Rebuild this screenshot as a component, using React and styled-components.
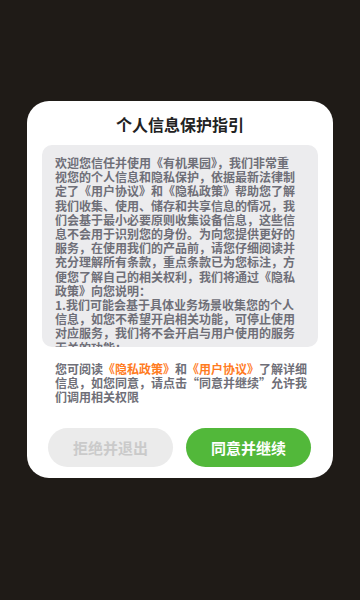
import styled, { createGlobalStyle } from 'styled-components'

const GlobalStyle = createGlobalStyle`
    html, body {
        margin: 0;
        padding: 0;
        background: #1f1b17;
    }
    body {
        font-family: "Noto Sans CJK SC", "Noto Sans", sans-serif;
    }
`

const Screen = styled.div`
    width: 360px;
    height: 600px;
    background: #1f1b17;
    display: flex;
    justify-content: center;
    padding-top: 101px;
    box-sizing: border-box;
    overflow: hidden;
`

const Modal = styled.section`
    width: 306px;
    height: 377px;
    box-sizing: border-box;
    background: #ffffff;
    border-radius: 22px;
    padding: 12px 15px 11px;
    display: flex;
    flex-direction: column;
`

const Title = styled.h2`
    margin: 0;
    font-size: 16px;
    line-height: 22px;
    font-weight: bold;
    color: #222222;
    text-align: center;
`

const ScrollBox = styled.div`
    margin-top: 10px;
    height: 202px;
    box-sizing: border-box;
    background: #ececee;
    border-radius: 10px;
    padding: 11px 22px 0 13px;
    overflow: hidden;
`

const BoxText = styled.p`
    margin: 0;
    width: 240px;
    font-size: 12px;
    line-height: 14.2px;
    font-weight: bold;
    color: #6f6f78;
    white-space: pre-wrap;
`

const Notice = styled.p`
    margin: 15px 0 0;
    padding: 0 6px 0 13px;
    font-size: 12px;
    line-height: 14px;
    font-weight: bold;
    color: #6f6f78;
    white-space: nowrap;
`

const Link = styled.span`
    color: #ff7c1f;
`

const ButtonRow = styled.div`
    margin-top: auto;
    padding: 0 7px 0 6px;
    display: flex;
    justify-content: space-between;
`

const Button = styled.button`
    width: 125px;
    height: 39px;
    border: none;
    border-radius: 20px;
    font-family: "Noto Sans CJK SC", sans-serif;
    font-size: 15px;
    font-weight: bold;
    background: ${p => p.$primary ? '#52b83a' : '#ebebeb'};
    color: ${p => p.$primary ? '#ffffff' : '#cacaca'};
    padding: 0;
`

const policyText = `欢迎您信任并使用《有机果园》，我们非常重视您的个人信息和隐私保护，依据最新法律制定了《用户协议》和《隐私政策》帮助您了解我们收集、使用、储存和共享信息的情况，我们会基于最小必要原则收集设备信息，这些信息不会用于识别您的身份。为向您提供更好的服务，在使用我们的产品前，请您仔细阅读并充分理解所有条款，重点条款已为您标注，方便您了解自己的相关权利，我们将通过《隐私政策》向您说明：
1.我们可能会基于具体业务场景收集您的个人信息，如您不希望开启相关功能，可停止使用对应服务，我们将不会开启与用户使用的服务无关的功能；`

const App = () => {
    return (
        <>
            <GlobalStyle />
            <Screen>
                <Modal>
                    <Title>个人信息保护指引</Title>
                    <ScrollBox>
                        <BoxText>{policyText}</BoxText>
                    </ScrollBox>
                    <Notice>
                        您可阅读<Link>《隐私政策》</Link>和<Link>《用户协议》</Link>了解详细<br />
                        信息，如您同意，请点击“同意并继续”允许我<br />
                        们调用相关权限
                    </Notice>
                    <ButtonRow>
                        <Button>拒绝并退出</Button>
                        <Button $primary>同意并继续</Button>
                    </ButtonRow>
                </Modal>
            </Screen>
        </>
    )
}

export default App
